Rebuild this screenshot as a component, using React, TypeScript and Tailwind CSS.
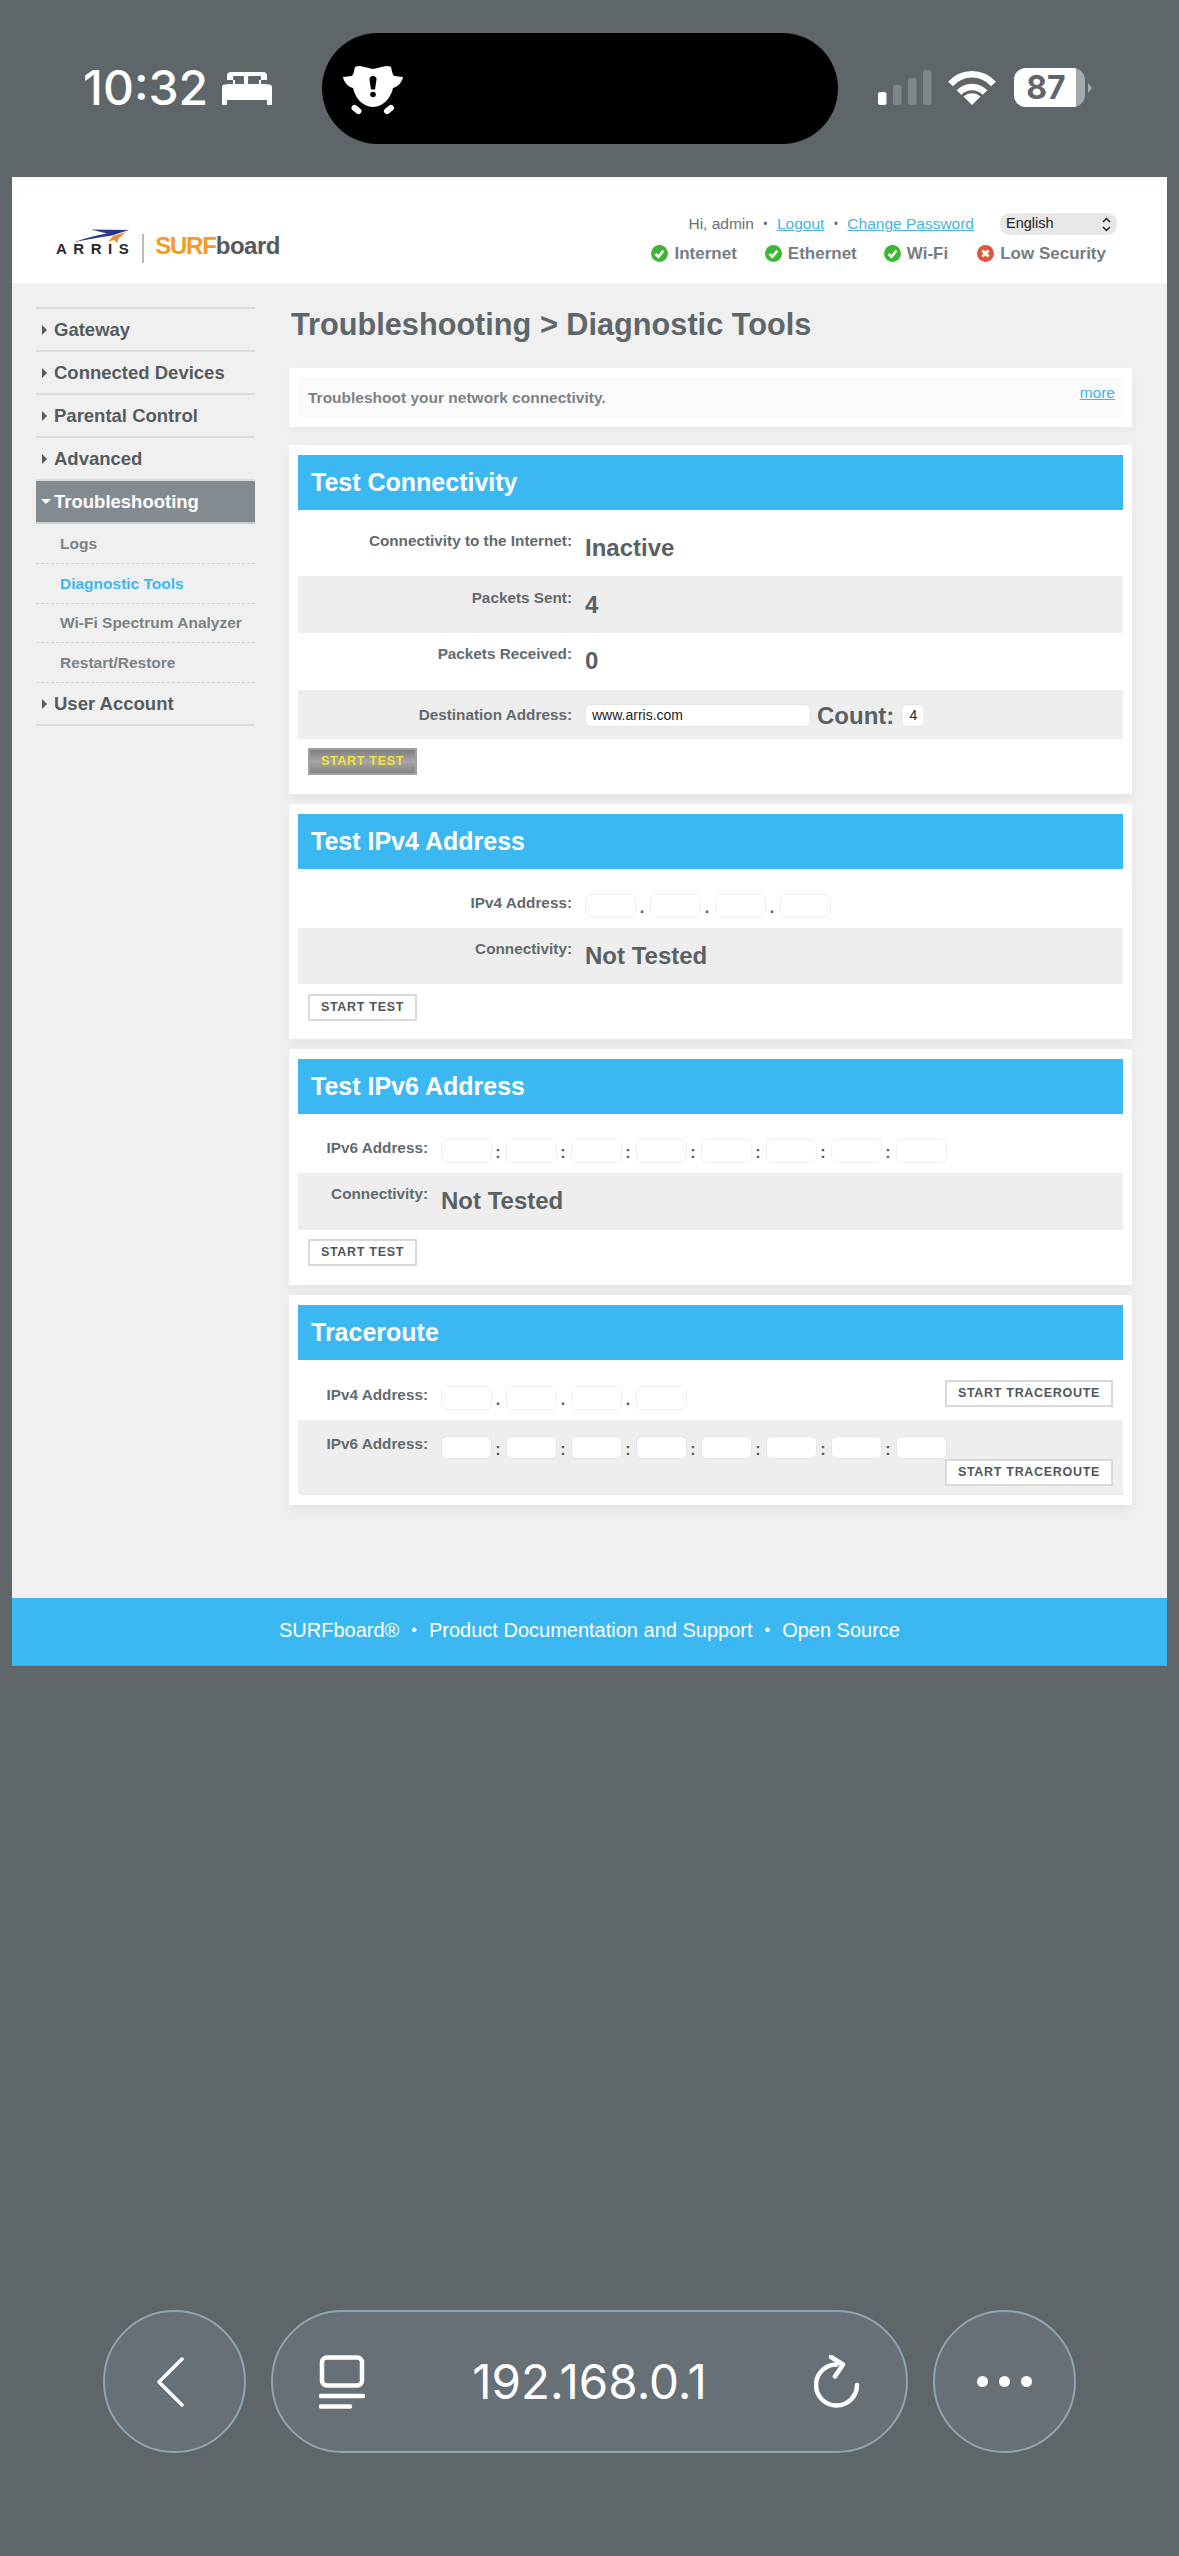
import React from "react";

const F = "font-['Liberation_Sans',Arial,sans-serif]";

function Caret({ open }: { open?: boolean }) {
  return open ? (
    <span className="w-0 h-0 border-l-[5px] border-r-[5px] border-t-[5px] border-l-transparent border-r-transparent border-t-white" />
  ) : (
    <span className="w-0 h-0 border-t-[5px] border-b-[5px] border-l-[5px] border-t-transparent border-b-transparent border-l-[#555b5e] ml-[1px]" />
  );
}

function NavItem({ label, active }: { label: string; active?: boolean }) {
  return (
    <div
      className={`h-[43px] flex items-center border-b-[2px] text-[18.5px] font-bold ${
        active ? "bg-[#848b90] text-white border-[#c9cccd]" : "text-[#555b5e] border-[#dcdcdc]"
      }`}
    >
      <span className="w-[18px] pl-[5px] flex items-center shrink-0">
        <Caret open={active} />
      </span>
      {label}
    </div>
  );
}

function SubItem({ label, current }: { label: string; current?: boolean }) {
  return (
    <div
      className={`h-[39.75px] flex items-center pl-[24px] text-[15.5px] font-bold border-b border-dashed border-[#d4d4d4] ${
        current ? "text-[#3cb8f0]" : "text-[#7c8285]"
      }`}
    >
      {label}
    </div>
  );
}

function Row({
  label,
  grey,
  h,
  w = 274,
  pt,
  children,
}: {
  label: string;
  grey?: boolean;
  h: number;
  w?: number;
  pt: number;
  children: React.ReactNode;
}) {
  return (
    <div className={`flex ${grey ? "bg-[#eeeeee]" : ""}`} style={{ height: h, paddingTop: pt }}>
      <div className="text-right text-[15.3px] leading-[20px] font-bold text-[#636a6d] shrink-0" style={{ width: w }}>
        {label}
      </div>
      <div className="ml-[13px] flex-1 relative">{children}</div>
    </div>
  );
}

function Value({ children }: { children: React.ReactNode }) {
  return <div className="text-[24px] leading-[28px] font-bold text-[#5a6164] mt-[3px]">{children}</div>;
}

function Box({ w = 51, h = 23, solid }: { w?: number; h?: number; solid?: boolean }) {
  return (
    <span
      className={`inline-block rounded-[6px] border shrink-0 bg-white ${solid ? "border-[#e6e6e6]" : "border-[#f0f0f0]"}`}
      style={{ width: w, height: h }}
    />
  );
}

function Octets({ n, sep, h = 23, solid }: { n: number; sep: string; h?: number; solid?: boolean }) {
  return (
    <div className="flex items-start">
      {Array.from({ length: n }).map((_, i) => (
        <React.Fragment key={i}>
          <Box h={h} solid={solid} />
          {i < n - 1 && (
            <span className="w-[14px] pr-[2px] text-center text-[16px] leading-[27px] font-bold text-[#555b5e]">{sep}</span>
          )}
        </React.Fragment>
      ))}
    </div>
  );
}

function Btn({ label, hot, w = 109 }: { label: string; hot?: boolean; w?: number }) {
  return (
    <div
      className={`h-[27px] flex items-center justify-center border-[2px] text-[12.5px] tracking-[0.7px] font-bold ${
        hot
          ? "bg-gradient-to-b from-[#7f7f7f] via-[#a6a6a6] to-[#838383] border-[#a0a0a0] text-[#f4e03a]"
          : "bg-white border-[#d9d9d9] text-[#50565a]"
      }`}
      style={{ width: w }}
    >
      {label}
    </div>
  );
}

function Card({ title, children }: { title: string; children: React.ReactNode }) {
  return (
    <section className="bg-white px-[9px] pt-[10px] pb-[10px] shadow-[0_6px_12px_rgba(0,0,0,0.05)]">
      <h2 className="h-[55px] bg-[#3bb8f1] text-white text-[25px] font-bold flex items-center pl-[13px]">{title}</h2>
      {children}
    </section>
  );
}

function Check() {
  return (
    <svg width="17" height="17" viewBox="0 0 17 17">
      <circle cx="8.5" cy="8.5" r="8.5" fill="#3fb536" />
      <path d="M4.6 8.8l2.8 3 5-6.200" fill="none" stroke="#fff" strokeWidth="2.600" />
    </svg>
  );
}

function Cross() {
  return (
    <svg width="17" height="17" viewBox="0 0 17 17">
      <circle cx="8.5" cy="8.5" r="8.5" fill="#e2553a" />
      <path d="M5.400 5.400l6.200 6.200M11.600 5.400l-6.200 6.200" fill="none" stroke="#fff" strokeWidth="2.800" />
    </svg>
  );
}

function Status({ label, bad, gap }: { label: string; bad?: boolean; gap: number }) {
  return (
    <span className="flex items-center gap-[6px] text-[17px] font-bold text-[#777c7f]" style={{ marginRight: gap }}>
      {bad ? <Cross /> : <Check />}
      {label}
    </span>
  );
}

function Logo() {
  return (
    <div className="relative flex items-baseline h-[30px] mt-[54px] ml-[44px] leading-[30px]">
      <svg className="absolute left-[17px] top-[-2px]" width="57" height="14" viewBox="0 0 57 14">
        <path d="M0 13.500C12 9 24 6 34 4.500L18 .5 56 1 39 6.500C26 8 12 11 0 13.500Z" fill="#2c3588" />
        <path d="M35 13l5-6 13-4-7 6-2 5-3-3Z" fill="#f08f2c" />
      </svg>
      <span className="text-[15px] font-bold tracking-[6.500px] text-[#26282a]">ARRIS</span>
      <span className="absolute left-[86px] top-[3px] w-[1.500px] h-[29px] bg-[#b9bbbb]" />
      <div className="ml-[20px] flex items-baseline text-[24px] font-bold">
        <span className="text-[#f79a1f] tracking-[-1.200px]">SURF</span>
        <span className="text-[#55595c] tracking-[-0.500px]">board</span>
      </div>
    </div>
  );
}

function BedIcon() {
  return (
    <svg width="50" height="33" viewBox="0 0 50 33" fill="#fff">
      <path d="M5 4a4 4 0 0 1 4-4h32a4 4 0 0 1 4 4v9H5Z" />
      <rect x="11" y="4" width="11" height="4" rx="1" fill="#5f6669" />
      <rect x="26" y="4" width="13" height="4" rx="1" fill="#5f6669" />
      <rect x="5" y="8" width="40" height="4" fill="#5f6669" />
      <rect x="11" y="8" width="2" height="4" fill="#fff" />
      <rect x="22" y="8" width="4" height="4" fill="#fff" />
      <rect x="37" y="8" width="2" height="4" fill="#fff" />
      <path d="M3 12.500h44a3 3 0 0 1 3 3V28H0V15.500a3 3 0 0 1 3-3Z" />
      <rect x="0" y="27" width="5" height="6" rx="1" />
      <rect x="45" y="27" width="5" height="6" rx="1" />
    </svg>
  );
}

function BugIcon() {
  return (
    <svg width="62" height="52" viewBox="0 0 62 52">
      <path
        fill="#fff"
        d="M13 4C18 1 24 5 31 6 38 5 44 1 49 4 50 8 50 10 52 13L61 14C60 20 55 24 51 25 49 34 42 44 31 44 20 44 13 34 11 25 7 24 2 20 1 14L10 13C12 10 12 8 13 4Z"
      />
      <path d="M27.500 16.500a3.500 3.500 0 0 1 7 0L33 26.500h-4Z" fill="#000" />
      <circle cx="31" cy="31.500" r="2.800" fill="#000" />
      <rect x="9" y="43.500" width="11" height="6" rx="3" fill="#fff" transform="rotate(38 14.500 46.500)" />
      <rect x="41.500" y="43.500" width="11" height="6" rx="3" fill="#fff" transform="rotate(-38 47 46.500)" />
    </svg>
  );
}

function SignalWifi() {
  return (
    <div className="flex items-center gap-[16px]">
      <svg width="54" height="35" viewBox="0 0 54 35">
        <rect x="0" y="22" width="8.500" height="13" rx="2.500" fill="#fff" />
        <rect x="15" y="15" width="8.500" height="20" rx="2.500" fill="#7f8689" />
        <rect x="30" y="8" width="8.500" height="27" rx="2.500" fill="#7f8689" />
        <rect x="45" y="0" width="8.500" height="35" rx="2.500" fill="#7f8689" />
      </svg>
      <svg width="48" height="35" viewBox="0 0 48 35" fill="none" stroke="#fff" strokeWidth="6.500">
        <path d="M2.500 14C14.500 1 33.500 1 45.500 14" />
        <path d="M11 22.500c7-7.500 19-7.500 26 0" />
        <path fill="#fff" stroke="none" d="M24 35 15.500 26.500c5-4.500 12-4.500 17 0Z" />
      </svg>
    </div>
  );
}

function Battery() {
  return (
    <div className="flex items-center ml-[18px]">
      <div className="relative w-[71px] h-[39px] rounded-[12px] bg-[#a4a9ab] overflow-hidden">
        <div className="absolute left-0 top-0 bottom-0 w-[62px] bg-white" />
        <span className="absolute left-[-1px] top-0 bottom-0 w-[66px] flex items-center justify-center text-[#5f6669] text-[32px] font-bold font-['Inter',sans-serif]">
          87
        </span>
      </div>
      <div className="ml-[3px] w-0 h-0 border-t-[5px] border-b-[5px] border-l-[4px] border-t-transparent border-b-transparent border-l-[#a4a9ab]" />
    </div>
  );
}

function TabsIcon() {
  return (
    <svg width="46" height="54" viewBox="0 0 46 54" fill="none" stroke="#fff" strokeWidth="4.500">
      <rect x="3" y="2.500" width="40" height="28" rx="5" />
      <path d="M2 41h42M2 51.500h29" strokeLinecap="round" />
    </svg>
  );
}

function ReloadIcon() {
  return (
    <svg width="46" height="54" viewBox="0 0 46 54" fill="none" stroke="#fff" strokeWidth="4.500" strokeLinecap="round" strokeLinejoin="round">
      <path d="M43 30a20.500 20.500 0 1 1-20.500-20.500" />
      <path d="M17 2l12 7.500-8 12" />
    </svg>
  );
}

const glass = "h-[143px] border-[2px] border-[#8fa5b2] bg-[#667076] shrink-0 flex items-center";

export default function App() {
  return (
    <div className={`w-[1179px] h-[2556px] bg-[#5f6669] flex flex-col ${F}`}>
      <div className="h-[177px] flex items-start">
        <div className="ml-[83px] mt-[57px] w-[130px] text-white text-[48px] leading-[62px] font-medium font-['Inter',sans-serif]">
          10:32
        </div>
        <div className="mt-[72px] ml-[9px]">
          <BedIcon />
        </div>
        <div className="ml-[50px] mt-[33px] w-[516px] h-[111px] rounded-[56px] bg-black pl-[20px] pt-[30px]">
          <BugIcon />
        </div>
        <div className="ml-[40px] mt-[68px] flex items-center h-[39px]">
          <SignalWifi />
          <Battery />
        </div>
      </div>

      <div className="mx-[12px] w-[1155px]">
        <header className="h-[106px] bg-white flex justify-between pr-[50px]">
          <Logo />
          <div className="flex flex-col items-end pt-[36px]">
            <div className="flex items-center h-[22px] text-[15.5px] text-[#6b6f71]">
              <span>Hi, admin</span>
              <span className="w-[23px] text-center text-[12px]">•</span>
              <span className="underline text-[#45b4e6]">Logout</span>
              <span className="w-[23px] text-center text-[12px]">•</span>
              <span className="underline text-[#45b4e6]">Change Password</span>
              <div className="ml-[26px] w-[117px] h-[22px] rounded-[10px] bg-[#e8e8e8] flex items-center justify-between pl-[6px] pr-[6px] text-[14.5px] text-[#222]">
                English
                <svg width="9" height="15" viewBox="0 0 9 15" fill="none" stroke="#222" strokeWidth="1.500">
                  <path d="M1 5l3.500-3.500L8 5M1 10l3.500 3.500L8 10" />
                </svg>
              </div>
            </div>
            <div className="flex items-center mt-[6px]">
              <Status label="Internet" gap={28} />
              <Status label="Ethernet" gap={27} />
              <Status label="Wi-Fi" gap={29} />
              <Status label="Low Security" bad gap={11} />
            </div>
          </div>
        </header>

        <div className="h-[1315px] bg-[#f0f0f0] flex pl-[24px] pt-[24px]">
          <nav className="w-[219px] shrink-0 border-t-[2px] border-[#dcdcdc] self-start">
            <NavItem label="Gateway" />
            <NavItem label="Connected Devices" />
            <NavItem label="Parental Control" />
            <NavItem label="Advanced" />
            <NavItem label="Troubleshooting" active />
            <SubItem label="Logs" />
            <SubItem label="Diagnostic Tools" current />
            <SubItem label="Wi-Fi Spectrum Analyzer" />
            <SubItem label="Restart/Restore" />
            <NavItem label="User Account" />
          </nav>

          <main className="ml-[34px] w-[843px] flex flex-col">
            <h1 className="text-[30.7px] leading-[36px] font-bold text-[#5f666a] pl-[2px]">
              Troubleshooting &gt; Diagnostic Tools
            </h1>
            <div className="mt-[25px] mb-[18px] h-[59px] bg-white px-[9px] py-[9px] relative shadow-[0_4px_10px_rgba(0,0,0,0.04)]">
              <div className="h-full bg-[#fafafa] flex items-center pl-[10px] text-[15.5px] font-bold text-[#7c8285]">
                Troubleshoot your network connectivity.
              </div>
              <span className="absolute right-[17px] top-[13px] text-[15.5px] underline text-[#45b4e6]">more</span>
            </div>

            <div className="flex flex-col gap-[10px]">
              <Card title="Test Connectivity">
                <Row label="Connectivity to the Internet:" h={66} pt={21}>
                  <Value>Inactive</Value>
                </Row>
                <Row label="Packets Sent:" grey h={57} pt={12}>
                  <Value>4</Value>
                </Row>
                <Row label="Packets Received:" h={57} pt={11}>
                  <Value>0</Value>
                </Row>
                <Row label="Destination Address:" grey h={49} pt={15}>
                  <div className="flex items-center mt-[-1px]">
                    <div className="w-[226px] h-[23px] rounded-[6px] bg-white border border-[#e4e4e4] flex items-center pl-[6px] text-[14px] text-[#222]">
                      www.arris.com
                    </div>
                    <span className="ml-[6px] text-[24px] leading-[23px] font-bold text-[#5a6164]">Count:</span>
                    <div className="ml-[7px] w-[24px] h-[23px] rounded-[6px] bg-white border border-[#e4e4e4] flex items-center justify-center text-[14px] text-[#222]">
                      4
                    </div>
                  </div>
                </Row>
                <div className="pt-[9px] pl-[10px] h-[45px]">
                  <Btn label="START TEST" hot />
                </div>
              </Card>

              <Card title="Test IPv4 Address">
                <Row label="IPv4 Address:" h={59} pt={24}>
                  <div className="mt-[1px]">
                    <Octets n={4} sep="." />
                  </div>
                </Row>
                <Row label="Connectivity:" grey h={56} pt={11}>
                  <Value>Not Tested</Value>
                </Row>
                <div className="pt-[10px] pl-[10px] h-[45px]">
                  <Btn label="START TEST" />
                </div>
              </Card>

              <Card title="Test IPv6 Address">
                <Row label="IPv6 Address:" w={130} h={59} pt={24}>
                  <div className="mt-[1px]">
                    <Octets n={8} sep=":" h={24} />
                  </div>
                </Row>
                <Row label="Connectivity:" w={130} grey h={57} pt={11}>
                  <Value>Not Tested</Value>
                </Row>
                <div className="pt-[9px] pl-[10px] h-[45px]">
                  <Btn label="START TEST" />
                </div>
              </Card>

              <Card title="Traceroute">
                <Row label="IPv4 Address:" w={130} h={60} pt={25}>
                  <div className="mt-[1px]">
                    <Octets n={4} sep="." h={24} />
                  </div>
                  <div className="absolute right-[10px] top-[-5px]">
                    <Btn label="START TRACEROUTE" w={168} />
                  </div>
                </Row>
                <Row label="IPv6 Address:" w={130} grey h={75} pt={14}>
                  <div className="mt-[2px]">
                    <Octets n={8} sep=":" h={23} solid />
                  </div>
                  <div className="absolute right-[10px] top-[25px]">
                    <Btn label="START TRACEROUTE" w={168} />
                  </div>
                </Row>
              </Card>
            </div>
          </main>
        </div>

        <footer className="h-[68px] pb-[4px] bg-[#3bb8f1] border-b border-[#5aa5c8] flex items-center justify-center text-[20px] text-white">
          <span>SURFboard®</span>
          <span className="mx-[12px] text-[16px]">•</span>
          <span>Product Documentation and Support</span>
          <span className="mx-[12px] text-[16px]">•</span>
          <span>Open Source</span>
        </footer>
      </div>

      <div className="mt-[644px] pl-[103px] flex gap-[25px]">
        <div className={`${glass} w-[143px] rounded-full justify-center`}>
          <svg className="mr-[9px]" width="27" height="50" viewBox="0 0 27 50" fill="none" stroke="#fff" strokeWidth="3.500" strokeLinecap="round" strokeLinejoin="round">
            <path d="M25 2 2 25l23 23" />
          </svg>
        </div>
        <div className={`${glass} w-[637px] rounded-[72px] justify-between pl-[46px] pr-[46px]`}>
          <TabsIcon />
          <span className="text-[47.5px] text-white font-['Inter',sans-serif]">192.168.0.1</span>
          <ReloadIcon />
        </div>
        <div className={`${glass} w-[143px] rounded-full justify-center gap-[11px]`}>
          <span className="w-[11px] h-[11px] rounded-full bg-white" />
          <span className="w-[11px] h-[11px] rounded-full bg-white" />
          <span className="w-[11px] h-[11px] rounded-full bg-white" />
        </div>
      </div>
    </div>
  );
}
